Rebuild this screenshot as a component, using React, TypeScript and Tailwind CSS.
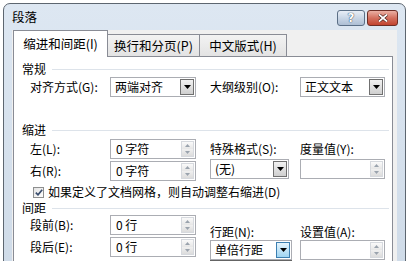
import React from "react";

const font = "font-['Noto_Sans_CJK_SC','Microsoft_YaHei',sans-serif]";

const Header = ({ title }: { title: string }) => (
  <div className="flex h-[14px] items-center pr-[3px]">
    <span className="text-[12px] leading-[14px] text-black">{title}</span>
    <div className="ml-[6px] h-px flex-1 bg-[#dde3ea]" />
  </div>
);

const Label = ({ text, w = "w-[80px]" }: { text: string; w?: string }) => (
  <div className={`${w} shrink-0 text-[12px] leading-[14px] text-black`}>{text}</div>
);

const Arrow = ({ up, color = "#7a7a7a" }: { up?: boolean; color?: string }) => (
  <svg width="5" height="3" viewBox="0 0 5 3">
    <path d={up ? "M0 3 L2.5 0 L5 3 Z" : "M0 0 L2.5 3 L5 0 Z"} fill={color} />
  </svg>
);

const Spin = ({ value, w = "w-[86px]" }: { value?: string; w?: string }) => (
  <div className={`${w} flex h-[20px] shrink-0 items-center border border-[#abadb3] bg-white`}>
    <span className="pl-[5px] text-[12px] leading-[14px] text-black">{value}</span>
    <div className="ml-auto mr-[1px] flex h-[16px] w-[13px] flex-col border border-[#d6d9de]">
      <div className="flex flex-1 items-center justify-center bg-gradient-to-b from-[#fafafa] to-[#e6e6e6]">
        <Arrow up color="#9aa3ad" />
      </div>
      <div className="flex flex-1 items-center justify-center bg-gradient-to-b from-[#f0f0f0] to-[#dcdcdc]">
        <Arrow color="#9aa3ad" />
      </div>
    </div>
  </div>
);

const Combo = ({
  value,
  w = "w-[86px]",
  active,
}: {
  value: string;
  w?: string;
  active?: boolean;
}) => (
  <div className={`${w} relative flex h-[20px] shrink-0 items-center border border-[#abadb3] bg-white`}>
    <span className="pl-[4px] text-[12px] leading-[14px] text-black">{value}</span>
    <div
      className={`ml-auto mr-[1px] flex h-[16px] w-[14px] items-center justify-center border ${
        active
          ? "border-[#3c7fb1] bg-gradient-to-b from-[#e5f4fc] to-[#9fd5f3]"
          : "border-[#707070] bg-gradient-to-b from-[#f2f2f2] to-[#cfcfcf]"
      }`}
    >
      <svg width="7" height="4" viewBox="0 0 7 4">
        <path d="M0 0 L7 0 L3.5 4 Z" fill="#000" />
      </svg>
    </div>
    {active && (
      <div className="absolute left-[-1px] top-[19px] z-20 w-[82px] border border-[#646464] bg-white">
        <div className="px-[3px] text-[12px] leading-[16px] text-black">单倍行距</div>
        <div className="px-[3px] text-[12px] leading-[16px] text-black">1.5 倍行距</div>
      </div>
    )}
  </div>
);

export default function App() {
  return (
    <div className={`${font} relative h-[261px] w-[409px] overflow-hidden bg-white`}>
      <div className="ml-[3px] mt-[3px] flex h-[270px] w-[403px] flex-col rounded-t-[7px] border border-[#5d6670] bg-gradient-to-b from-[#dde7f2] to-[#cfdbe8] px-[8px]">
        {/* title bar */}
        <div className="flex h-[26px] shrink-0 items-center">
          <span className="text-[12.5px] leading-[14px] text-black">段落</span>
          <div className="ml-auto flex items-start pt-[2px]">
            <div className="flex h-[16px] w-[28px] items-center justify-center rounded-[3px] border border-[#5b6f86] bg-gradient-to-b from-[#e8eef6] via-[#c9d6e6] to-[#aebfd4]">
              <span className="font-['DejaVu_Sans',sans-serif] text-[12px] font-bold leading-none text-white [text-shadow:0_0_1px_#2b3f57,0_0_1px_#2b3f57]">
                ?
              </span>
            </div>
            <div className="ml-[2px] mr-[-1px] flex h-[16px] w-[31px] items-center justify-center rounded-[3px] border border-[#6d2e26] bg-gradient-to-b from-[#eab0a4] via-[#d3705f] to-[#c2432f]">
              <svg width="10" height="8" viewBox="0 0 10 8">
                <path d="M1 0.5 L9 7.5 M9 0.5 L1 7.5" stroke="#3a1410" strokeWidth="3" />
                <path d="M1 0.5 L9 7.5 M9 0.5 L1 7.5" stroke="#fff" strokeWidth="1.8" />
              </svg>
            </div>
          </div>
        </div>

        {/* client */}
        <div className="flex flex-1 flex-col bg-[#f0f0f0] pl-[1px] pr-[4px]">
          {/* tabs */}
          <div className="flex h-[26px] items-end">
            <div className="relative z-10 -mb-px flex h-[27px] w-[95px] items-center justify-center border border-b-0 border-[#898c95] bg-white text-[12.5px] leading-[14px] text-black">
              缩进和间距(I)
            </div>
            <div className="flex h-[22px] w-[92px] items-center justify-center border-r border-t border-[#898c95] bg-gradient-to-b from-[#f3f3f3] to-[#e3e3e3] text-[12.5px] leading-[14px] text-black">
              换行和分页(P)
            </div>
            <div className="flex h-[22px] w-[87px] items-center justify-center border-r border-t border-[#898c95] bg-gradient-to-b from-[#f3f3f3] to-[#e3e3e3] text-[12.5px] leading-[14px] text-black">
              中文版式(H)
            </div>
          </div>

          {/* tab page */}
          <div className="flex-1 border border-[#898c95] bg-white pl-[8px]">
            <div className="mt-[5px]">
              <Header title="常规" />
            </div>
            <div className="ml-[8px] mt-[1px] flex items-center">
              <Label text="对齐方式(G):" />
              <Combo value="两端对齐" />
              <div className="w-[14px]" />
              <Label text="大纲级别(O):" w="w-[90px]" />
              <Combo value="正文文本" w="w-[85px]" />
            </div>

            <div className="mt-[26px]">
              <Header title="缩进" />
            </div>
            <div className="ml-[8px] mt-[2px] flex">
              <div className="flex flex-col gap-[2px]">
                <div className="flex items-center">
                  <Label text="左(L):" />
                  <Spin value="0 字符" />
                </div>
                <div className="flex items-center">
                  <Label text="右(R):" />
                  <Spin value="0 字符" />
                </div>
              </div>
              <div className="ml-[14px] flex w-[90px] flex-col">
                <div className="flex h-[20px] items-center text-[12px] leading-[14px]">特殊格式(S):</div>
                <Combo value="(无)" w="w-[79px]" />
              </div>
              <div className="flex flex-col">
                <div className="flex h-[20px] items-center text-[12px] leading-[14px]">度量值(Y):</div>
                <Spin w="w-[85px]" />
              </div>
            </div>

            <div className="ml-[11px] mt-[3px] flex h-[16px] items-center">
              <div className="flex h-[11px] w-[11px] items-center justify-center border border-[#8e8f8f] bg-gradient-to-br from-[#e4e4e4] to-[#ffffff]">
                <svg width="8" height="7" viewBox="0 0 8 7">
                  <path d="M0.8 3.6 L3 5.8 L7.2 0.8" fill="none" stroke="#3a4e6e" strokeWidth="1.7" />
                </svg>
              </div>
              <span className="ml-[4px] text-[12px] leading-[14px] text-black">
                如果定义了文档网格，则自动调整右缩进(D)
              </span>
            </div>

            <div className="mt-[1px]">
              <Header title="间距" />
            </div>
            <div className="ml-[8px] flex">
              <div className="flex flex-col gap-[2px]">
                <div className="flex items-center">
                  <Label text="段前(B):" />
                  <Spin value="0 行" />
                </div>
                <div className="flex items-center">
                  <Label text="段后(E):" />
                  <Spin value="0 行" />
                </div>
              </div>
              <div className="ml-[14px] flex w-[90px] flex-col pt-[8px]">
                <div className="flex h-[17px] items-center text-[12px] leading-[14px]">行距(N):</div>
                <Combo value="单倍行距" w="w-[82px]" active />
              </div>
              <div className="flex flex-col pt-[8px]">
                <div className="flex h-[17px] items-center text-[12px] leading-[14px]">设置值(A):</div>
                <Spin w="w-[85px]" />
              </div>
            </div>
          </div>
        </div>
      </div>
    </div>
  );
}
